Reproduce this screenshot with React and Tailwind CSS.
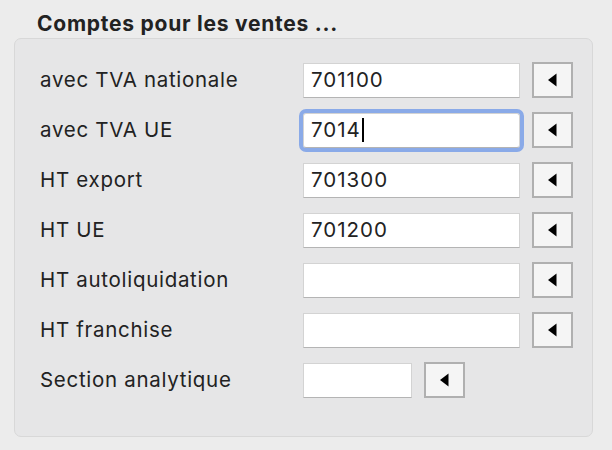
const rows = [
  { label: 'avec TVA nationale', value: '701100' },
  { label: 'avec TVA UE', value: '7014', focused: true },
  { label: 'HT export', value: '701300' },
  { label: 'HT UE', value: '701200' },
  { label: 'HT autoliquidation', value: '' },
  { label: 'HT franchise', value: '' },
  { label: 'Section analytique', value: '', short: true },
];

function PickButton() {
  return (
    <button className="flex h-[36px] w-[41px] shrink-0 items-center justify-center border-2 border-[#b0b0b0] bg-[#f5f5f5] pr-[1px]">
      <svg width="10" height="14" viewBox="0 0 10 14" className="shrink-0">
        <polygon points="9.5,0.5 9.5,13.5 1,7" fill="#000" />
      </svg>
    </button>
  );
}

function Field({ value, focused, short }) {
  return (
    <div
      className={
        'flex h-[35px] items-center border border-[#d3d3d3] border-b-[#b4b4b4] bg-white pl-[7px] text-[20.5px] text-[#222] ' +
        (short ? 'w-[109px] ' : 'w-[217px] ') +
        (focused ? 'rounded-[3px] outline-4 outline-[#8aaae8] outline-offset-0' : '')
      }
    >
      <span className="tracking-[1px]">{value}</span>
      {focused && <span className="ml-[1px] h-[24px] w-[2px] bg-black" />}
    </div>
  );
}

export default function App() {
  return (
    <div
      className="h-[450px] w-[612px] overflow-hidden bg-[#ececec]"
      style={{ fontFamily: 'Inter, "Liberation Sans", sans-serif' }}
    >
      <div className="pl-[37px] pt-[11px] text-[21px] font-bold leading-[26px] tracking-[0.75px] text-[#222]">
        Comptes pour les ventes ...
      </div>
      <div className="ml-[14px] mt-[1px] h-[399px] w-[579px] rounded-[7px] border border-[#d8d8d8] bg-[#e6e6e7] pl-[25px] pt-[23px]">
        <div className="flex flex-col gap-[14px]">
          {rows.map((r) => (
            <div key={r.label} className="flex h-[36px] items-center">
              <div className="w-[263px] text-[20.5px] tracking-[0.7px] text-[#222]">{r.label}</div>
              <Field value={r.value} focused={r.focused} short={r.short} />
              <div className="ml-[12px]">
                <PickButton />
              </div>
            </div>
          ))}
        </div>
      </div>
    </div>
  );
}
